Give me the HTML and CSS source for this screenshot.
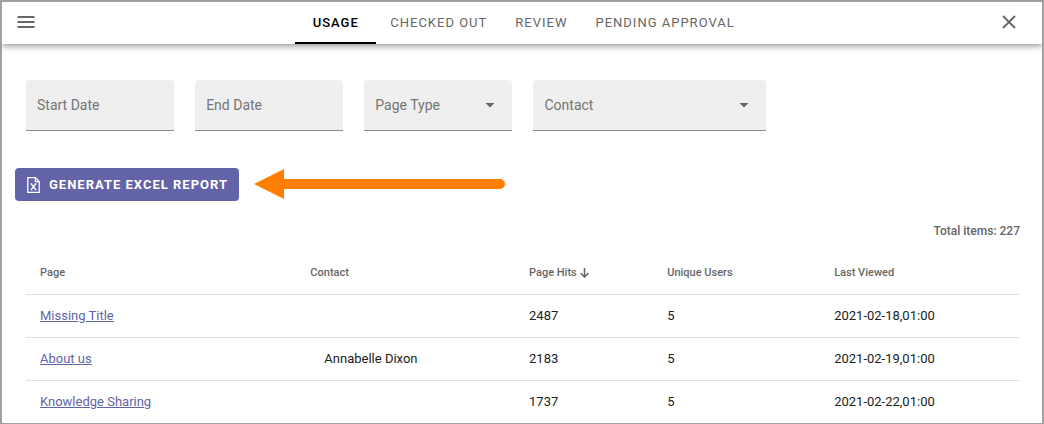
FILE: index.html
```html
<!DOCTYPE html>
<html lang="en">
<head>
<meta charset="utf-8">
<meta name="viewport" content="width=device-width, initial-scale=1">
<title>Usage</title>
<link rel="stylesheet" href="styles.css">
</head>
<body>
<div class="app">
  <header class="topbar">
    <button class="icon-button" type="button" aria-label="Menu">
      <svg width="18" height="12" viewBox="0 0 18 12"><path d="M.5 1h17M.5 6h17M.5 11h17" stroke="currentColor" stroke-width="1.8" fill="none"/></svg>
    </button>
    <nav class="tabs" aria-label="Reports">
      <button class="tab tab-active" type="button">USAGE</button>
      <button class="tab" type="button">CHECKED OUT</button>
      <button class="tab" type="button">REVIEW</button>
      <button class="tab" type="button">PENDING APPROVAL</button>
    </nav>
    <button class="icon-button icon-button-end" type="button" aria-label="Close">
      <svg width="14" height="14" viewBox="0 0 14 14"><path d="M1 1l12 12M13 1L1 13" stroke="currentColor" stroke-width="1.8" fill="none"/></svg>
    </button>
  </header>
  <main class="content">
    <form class="filters">
      <input class="field" type="text" placeholder="Start Date" aria-label="Start Date">
      <input class="field" type="text" placeholder="End Date" aria-label="End Date">
      <div class="select-wrap">
        <select class="field" aria-label="Page Type"><option>Page Type</option></select>
        <svg class="caret" width="10" height="5" viewBox="0 0 10 5"><path d="M.5 0h9L5 4.500z" fill="currentColor"/></svg>
      </div>
      <div class="select-wrap select-wide">
        <select class="field" aria-label="Contact"><option>Contact</option></select>
        <svg class="caret" width="10" height="5" viewBox="0 0 10 5"><path d="M.5 0h9L5 4.500z" fill="currentColor"/></svg>
      </div>
    </form>
    <div class="actions">
      <button class="generate" type="button">
        <svg width="13" height="16" viewBox="0 0 13 16" fill="none" stroke="currentColor"><path d="M1 .7h7.5L12.2 4.400v10.900H.8V.7z" stroke-width="1.300"/><path d="M8.300.8v3.800h3.800" stroke-width="1.200"/><path d="M4.400 7l4.200 5.500M8.600 7l-4.200 5.500M3.700 7h1.600M7.700 7h1.600M3.700 12.500h1.600M7.700 12.500h1.600" stroke-width="1.300"/></svg>
        <span>GENERATE EXCEL REPORT</span>
      </button>
      <svg class="pointer" width="251" height="31" viewBox="0 0 251 31" aria-hidden="true"><path d="M0 15L30 0v10h216a5 5 0 0 1 0 10H30v10z" fill="#ff8000"/></svg>
    </div>
    <p class="total">Total items: 227</p>
    <table class="report">
      <colgroup><col class="col-page"><col class="col-contact"><col class="col-hits"><col class="col-users"><col></colgroup>
      <thead>
        <tr>
          <th scope="col">Page</th>
          <th scope="col">Contact</th>
          <th scope="col" aria-sort="descending"><span class="sorted">Page Hits <svg width="9" height="10" viewBox="0 0 9 10"><path d="M4.500 0v9M.6 5l3.900 4 3.900-4" stroke="currentColor" stroke-width="1.500" fill="none"/></svg></span></th>
          <th scope="col">Unique Users</th>
          <th scope="col">Last Viewed</th>
        </tr>
      </thead>
      <tbody>
        <tr><td><a href="#">Missing Title</a></td><td></td><td>2487</td><td>5</td><td>2021-02-18,01:00</td></tr>
        <tr><td><a href="#">About us</a></td><td class="person">Annabelle Dixon</td><td>2183</td><td>5</td><td>2021-02-19,01:00</td></tr>
        <tr><td><a href="#">Knowledge Sharing</a></td><td></td><td>1737</td><td>5</td><td>2021-02-22,01:00</td></tr>
      </tbody>
    </table>
  </main>
</div>
</body>
</html>
```

FILE: styles.css
```css
* {
  box-sizing: border-box;
}

body {
  margin: 0;
  font-family: Roboto, "Liberation Sans", sans-serif;
  color: #212121;
  background: #fff;
}

button,
input,
select {
  font: inherit;
}

button {
  border: 0;
  padding: 0;
  background: none;
  cursor: pointer;
}

.app {
  min-height: 100vh;
  border: 2px solid #a0a0a0;
  border-bottom-width: 1px;
}

.topbar {
  display: grid;
  grid-template-columns: 1fr auto 1fr;
  height: 42px;
  box-shadow: 0 2px 4px -1px rgba(0, 0, 0, 0.2), 0 4px 5px rgba(0, 0, 0, 0.14), 0 1px 10px rgba(0, 0, 0, 0.12);
  clip-path: inset(0 0 -16px 0);
}

.icon-button {
  display: flex;
  align-items: center;
  justify-self: start;
  padding: 0 15px 2px;
  color: #666;
}

.icon-button-end {
  justify-self: end;
  padding: 0 26px 2px;
}

.tabs {
  display: flex;
}

.tab {
  padding: 0 14px;
  font-size: 13px;
  font-weight: 400;
  letter-spacing: 1px;
  color: #666;
  border-bottom: 2px solid transparent;
}

.tab-active {
  min-width: 81px;
  font-weight: 500;
  color: #000;
  border-bottom-color: #000;
}

.content {
  padding: 36px 22px 0 24px;
}

.filters {
  display: grid;
  grid-template-columns: repeat(12, 1fr);
  column-gap: 21px;
}

.filters > * {
  grid-column: span 2;
}

.filters > .select-wide {
  grid-column: span 3;
}

.field {
  width: 100%;
  min-width: 0;
  height: 51px;
  padding: 0 11px;
  font-size: 14px;
  color: #757575;
  background: #efefef;
  border: 0;
  border-bottom: 1px solid #8a8a8a;
  border-radius: 4px 4px 0 0;
  appearance: none;
}

.field::placeholder {
  color: #757575;
}

.select-wrap {
  display: grid;
  align-items: center;
}

.select-wrap > * {
  grid-area: 1 / 1;
}

.caret {
  justify-self: end;
  margin-right: 17px;
  color: #666;
  pointer-events: none;
}

.actions {
  display: flex;
  align-items: center;
  gap: 15px;
  margin: 37px 0 0 -11px;
}

.generate {
  display: flex;
  align-items: center;
  gap: 9px;
  height: 33px;
  padding: 0 11px 0 12px;
  font-size: 13px;
  font-weight: 700;
  letter-spacing: 1px;
  color: #fff;
  background: #6264a7;
  border-radius: 4px;
}

.total {
  margin: 22px 0 0;
  font-size: 12px;
  font-weight: 500;
  line-height: 16px;
  text-align: right;
  color: #666;
}

.report {
  width: 100%;
  table-layout: fixed;
  border-collapse: separate;
  border-spacing: 0;
  margin-top: 12px;
}

.col-page {
  width: 27.2%;
}

.col-contact {
  width: 22%;
}

.col-hits {
  width: 13.9%;
}

.col-users {
  width: 16.8%;
}

.report th,
.report td {
  height: 43px;
  padding: 0 14px;
  text-align: left;
  border-bottom: 1px solid #e0e0e0;
}

.report th {
  height: 44px;
  font-size: 11px;
  font-weight: 500;
  color: #666;
}

.report td {
  padding-bottom: 2px;
  font-size: 13px;
}

.report tr:last-child td {
  height: 42px;
  border-bottom: 0;
}

.report thead th {
  border-bottom: 1px solid #e0e0e0;
}

.report .person {
  padding-left: 28px;
}

.report a {
  color: #6264a7;
}

.sorted {
  display: flex;
  align-items: center;
  gap: 3px;
}
```
